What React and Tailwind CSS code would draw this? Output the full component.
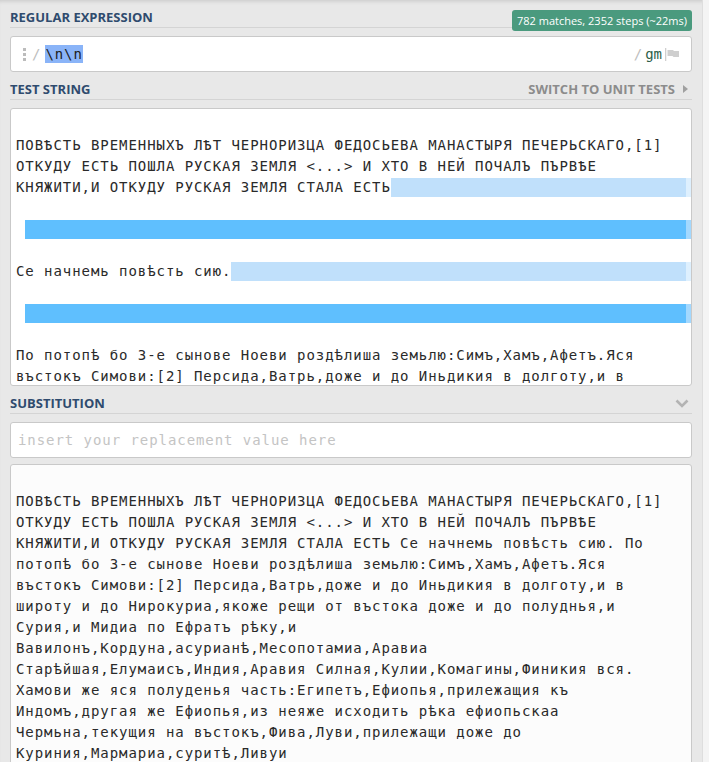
const mono = "font-['DejaVu_Sans_Mono','Liberation_Mono',monospace] text-[14px] tracking-[0.94px]";

function Header({ children, right, extra }) {
  return (
    <div className="relative pt-[9px] pb-[2px] mb-[8px] border-b border-[#d4d4d4] flex items-center justify-between">
      <span className="font-['Open_Sans',sans-serif] font-bold text-[13px] leading-[16px] text-[#2f4b6e]">{children}</span>
      {right}
      {extra}
    </div>
  );
}

function Line({ children }) {
  return <div className="h-[21px] flex items-center pl-[5px] whitespace-pre">{children}</div>;
}

function LightHit() {
  return <div className="flex-1 h-[19px] bg-[#c0e0fb] border-r-[5px] border-[#def0fe]" />;
}

function DarkHit() {
  return <div className="flex-1 ml-[9px] h-[19px] bg-[#5fbffe] border-r-[5px] border-[#a3d8fe]" />;
}

const result = [
  "",
  "ПОВѢСТЬ ВРЕМЕННЫХЪ ЛѢТ ЧЕРНОРИЗЦА ФЕДОСЬЕВА МАНАСТЫРЯ ПЕЧЕРЬСКАГО,[1]",
  "ОТКУДУ ЕСТЬ ПОШЛА РУСКАЯ ЗЕМЛЯ <...> И ХТО В НЕЙ ПОЧАЛЪ ПЪРВѢЕ",
  "КНЯЖИТИ,И ОТКУДУ РУСКАЯ ЗЕМЛЯ СТАЛА ЕСТЬ Се начнемь повѣсть сию. По",
  "потопѣ бо 3-е сынове Ноеви роздѣлиша земьлю:Симъ,Хамъ,Афетъ.Яся",
  "въстокъ Симови:[2] Персида,Ватрь,доже и до Иньдикия в долготу,и в",
  "широту и до Нирокуриа,якоже рещи от въстока доже и до полуднья,и",
  "Сурия,и Мидиа по Ефратъ рѣку,и",
  "Вавилонъ,Кордуна,асурианѣ,Месопотамиа,Аравиа",
  "Старѣйшая,Елумаисъ,Индия,Аравия Силная,Кулии,Комагины,Финикия вся.",
  "Хамови же яся полуденья часть:Египетъ,Ефиопья,прилежащия къ",
  "Индомъ,другая же Ефиопья,из неяже исходить рѣка ефиопьскаа",
  "Чермьна,текущия на въстокъ,Фива,Луви,прилежащи доже до",
  "Куриния,Мармариа,суритѣ,Ливуи",
];

export default function App() {
  return (
    <div className="w-[709px] h-[762px] overflow-hidden flex bg-[#e8e8e8] shadow-[inset_0_4px_4px_-3px_rgba(0,0,0,0.15)]">
      <div className="w-[702px] shrink-0 px-[10px]">
        <Header
          extra={
            <div className="absolute right-0 top-[10px] w-[180px] h-[21px] rounded-[3px] bg-[#4a9a7e] text-white font-['Open_Sans',sans-serif] text-[11px] leading-[21px] text-center whitespace-nowrap">
              782 matches, 2352 steps (~22ms)
            </div>
          }
        >
          REGULAR EXPRESSION
        </Header>

        <div className="h-[36px] bg-white border border-[#c9c9c9] rounded-[3px] flex items-center pl-[12px] pr-[11px]">
          <div className="flex flex-col gap-[2px] mr-[6px]">
            <span className="w-[3px] h-[3px] bg-[#bcbcbc]" />
            <span className="w-[3px] h-[3px] bg-[#bcbcbc]" />
            <span className="w-[3px] h-[3px] bg-[#bcbcbc]" />
          </div>
          <span className={`${mono} text-[#bdbdbd] mr-[4px]`}>/</span>
          <span className={`${mono} text-[#1c1c1c] bg-[#8ab4f8] leading-[18px]`}>\n\n</span>
          <div className="flex-1" />
          <span className={`${mono} text-[#bdbdbd] mr-[2px]`}>/</span>
          <span className={`${mono} text-[#2d6048] tracking-normal`}>gm</span>
          <svg width="15" height="13" viewBox="0 0 15 13" className="ml-[3px]">
            <rect x="0" y="0" width="1.3" height="13" fill="#cfcfcf" />
            <path d="M2.5 2 H8 L9 3 H14 V9 H8.5 L7.5 8 H2.5 Z" fill="#cfcfcf" />
          </svg>
        </div>

        <Header
          right={
            <span className="font-['Open_Sans',sans-serif] font-bold text-[13px] leading-[16px] text-[#8c8c8c] flex items-center gap-[8px] pr-[4px]">
              SWITCH TO UNIT TESTS
              <svg width="5" height="8" viewBox="0 0 5 8">
                <path d="M0 0 L5 4 L0 8 Z" fill="#a0a0a0" />
              </svg>
            </span>
          }
        >
          TEST STRING
        </Header>

        <div className={`h-[278px] overflow-hidden bg-white border border-[#c9c9c9] rounded-[3px] pt-[5px] ${mono} text-[#2a2a2a]`}>
          <Line> </Line>
          <Line>ПОВѢСТЬ ВРЕМЕННЫХЪ ЛѢТ ЧЕРНОРИЗЦА ФЕДОСЬЕВА МАНАСТЫРЯ ПЕЧЕРЬСКАГО,[1]</Line>
          <Line>ОТКУДУ ЕСТЬ ПОШЛА РУСКАЯ ЗЕМЛЯ {"<...>"} И ХТО В НЕЙ ПОЧАЛЪ ПЪРВѢЕ</Line>
          <Line>
            <span>КНЯЖИТИ,И ОТКУДУ РУСКАЯ ЗЕМЛЯ СТАЛА ЕСТЬ</span>
            <LightHit />
          </Line>
          <Line> </Line>
          <Line>
            <DarkHit />
          </Line>
          <Line> </Line>
          <Line>
            <span>Се начнемь повѣсть сию.</span>
            <LightHit />
          </Line>
          <Line> </Line>
          <Line>
            <DarkHit />
          </Line>
          <Line> </Line>
          <Line>По потопѣ бо 3-е сынове Ноеви роздѣлиша земьлю:Симъ,Хамъ,Афетъ.Яся</Line>
          <Line>въстокъ Симови:[2] Персида,Ватрь,доже и до Иньдикия в долготу,и в</Line>
        </div>

        <Header
          right={
            <svg width="14" height="9" viewBox="0 0 14 9" className="mr-[3px]">
              <path d="M1.5 1.5 L7 7 L12.5 1.5" fill="none" stroke="#b3b3b3" strokeWidth="2.6" />
            </svg>
          }
        >
          SUBSTITUTION
        </Header>

        <div className={`h-[36px] bg-white border border-[#c9c9c9] rounded-[3px] flex items-center pl-[7px] ${mono} text-[#c4c4c4]`}>
          insert your replacement value here
        </div>

        <div className={`mt-[6px] h-[320px] bg-[#fcfcfc] border border-[#c9c9c9] rounded-[3px] pt-[5px] ${mono} text-[#2a2a2a]`}>
          {result.map((t, i) => (
            <Line key={i}>{t || " "}</Line>
          ))}
        </div>
      </div>
      <div className="flex-1 bg-[#f4f4f4] border-l border-[#dedede]" />
    </div>
  );
}
